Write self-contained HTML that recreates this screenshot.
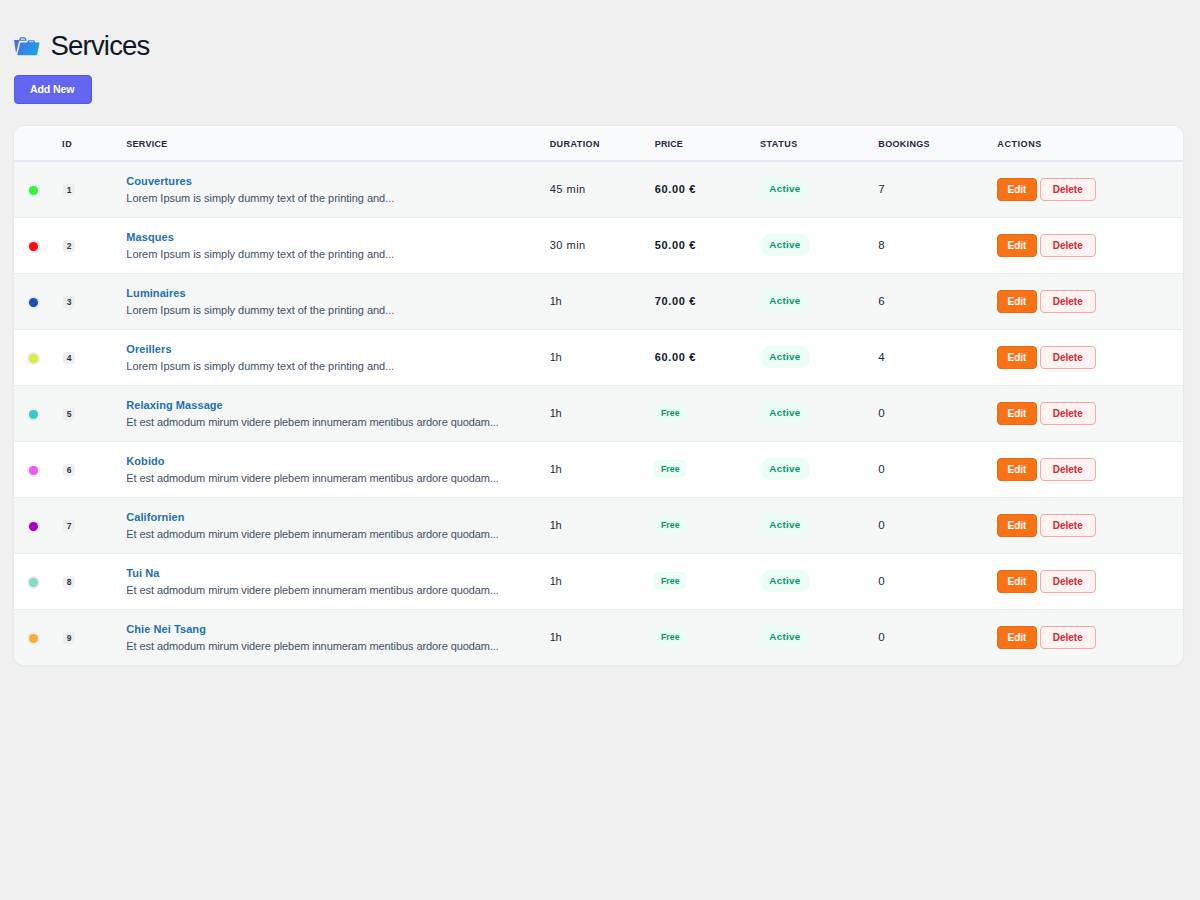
<!DOCTYPE html>
<html lang="en">
<head>
<meta charset="utf-8">
<title>Services</title>
<style>
*{box-sizing:border-box}
html,body{margin:0;padding:0}
body{width:1200px;height:900px;background:#f0f0f1;font-family:"Liberation Sans",sans-serif;color:#1e293b;position:relative;overflow:hidden}
.topband{position:absolute;left:0;top:15px;width:1200px;height:1px;background:#f2f2f2}
h1{position:absolute;left:50.5px;top:28px;margin:0;height:36px;line-height:36px;font-weight:400;font-size:27.5px;color:#0f172a;letter-spacing:-0.8px;white-space:nowrap}
.ico{position:absolute;left:14px;top:37px;width:26px;height:19px;display:block}
.add{position:absolute;left:13.7px;top:75px;width:78.5px;height:29px;letter-spacing:-.12px;padding:0 1.5px 1.6px 0;background:#6366f1;border:1px solid #5457e0;border-radius:4px;color:#fff;font-weight:700;font-size:10.6px;display:flex;align-items:center;justify-content:center}
.card{position:absolute;left:14px;top:126px;width:1169px;height:539px;background:#fff;border-radius:10px;overflow:hidden;box-shadow:0 0 0 1px #e6e9f0,0 1px 3px rgba(15,23,42,.06)}
.head{height:36px;background:#f8fafc;border-bottom:2px solid #e2e8f0;position:relative}
.head span{position:absolute;top:13px;font-size:9px;font-weight:700;letter-spacing:.4px;color:#1e293b;text-transform:uppercase;line-height:11px}
.row{height:56px;position:relative;border-bottom:1px solid #e8ebf0;background:#fff}
.row.alt{background:#f6f7f7}
.row:last-child{border-bottom:0}
.row>*{position:absolute}
.dot{left:15.1px;top:23.9px;width:8.8px;height:8.8px;border-radius:50%;box-shadow:0 0 0 1.9px #e9ebf1}
.id{left:49px;top:22px;width:12px;height:12px;background:#efefef;border-radius:3px;font-size:8.5px;font-weight:700;color:#27344a;text-align:center;line-height:12px}
.name{left:112.3px;top:12px;font-size:11px;font-weight:700;color:#2271b1;line-height:15px;white-space:nowrap;letter-spacing:.07px}
.desc{left:112.3px;top:29px;font-size:11px;color:#434f63;line-height:14px;white-space:nowrap;letter-spacing:-.03px}
.dur{left:535.7px;top:19.5px;font-size:11px;letter-spacing:-.4px;color:#1e293b;line-height:15px;white-space:nowrap}
.dur.w{letter-spacing:.5px}
.desc.e{letter-spacing:-.085px}
.price{left:640.7px;top:19.5px;font-size:11px;font-weight:700;color:#0f172a;line-height:15px;letter-spacing:.65px;white-space:nowrap}
.free{left:640.3px;top:18.3px;height:17.7px;width:32px;text-align:center;border-radius:5px;background:#ecfdf5;color:#059669;font-size:8.7px;font-weight:700;line-height:18.4px;letter-spacing:.05px}
.status{left:745.8px;top:15.6px;width:50.2px;height:22.8px;letter-spacing:.3px;border-radius:11.5px;background:#ecfdf5;color:#059669;font-size:9.8px;font-weight:700;line-height:22.8px;text-align:center}
.book{left:864.3px;top:19.5px;font-size:11.5px;color:#1e293b;line-height:15px}
.edit{left:983px;top:16px;width:40px;height:23px;border-radius:4px;background:#f97316;border:1px solid #ea6a0c;color:#fff;font-size:10px;font-weight:700;line-height:21px;text-align:center}
.del{left:1026px;top:16px;width:55.5px;height:23px;border-radius:4px;background:#fef2f2;border:1px solid #fca5a5;color:#d62a2a;font-size:10px;font-weight:700;line-height:21px;text-align:center}
</style>
</head>
<body>
<div class="topband"></div>
<svg class="ico" viewBox="0 0 26 19"><defs><linearGradient id="g" gradientUnits="userSpaceOnUse" x1="0" y1="2" x2="26" y2="18"><stop offset="0" stop-color="#5262f2"/><stop offset="1" stop-color="#14acdc"/></linearGradient></defs><path fill="url(#g)" d="M0 3.1 L5 3.1 L6 0.9 Q6.3 0.3 7 0.3 L10.6 0.3 Q11.3 0.3 11.6 0.9 L12.7 3.3 L12.7 3.8 L5.6 3.8 L5.2 3.6 L2.3 15.6 L1.9 15.6 Z M6.7 2.85 L11 2.85 L10.5 1.6 L7.2 1.6 Z" fill-rule="evenodd"/><path fill="url(#g)" d="M7 5.4 L13.1 5.4 L14.1 3.6 Q14.3 3.2 14.8 3.2 L19.9 3.2 Q20.4 3.2 20.5 3.6 L21.1 5.4 L25 5.4 Q25.7 5.4 25.5 6.1 L23.1 17.7 Q23 18.3 22.4 18.3 L3.9 18.3 Q3.1 18.3 3.3 17.6 L6.3 6 Q6.5 5.4 7 5.4 Z"/><path d="M15 5.2 L15.5 4.1 L19.5 4.1 L19.8 5.2 Z" fill="#a9cdf3"/></svg>
<h1>Services</h1>
<div class="add">Add New</div>
<div class="card">
<div class="head"><span style="left:48px;letter-spacing:0.7px">ID</span><span style="left:112.3px;letter-spacing:0.27px">Service</span><span style="left:535.7px;letter-spacing:0.43px">Duration</span><span style="left:640.8px;letter-spacing:0.13px">Price</span><span style="left:746px;letter-spacing:0.52px">Status</span><span style="left:864.3px;letter-spacing:0.33px">Bookings</span><span style="left:983.3px;letter-spacing:0.58px">Actions</span></div>
<div class="row alt"><i class="dot" style="background:#36f536"></i><span class="id">1</span><span class="name">Couvertures</span><span class="desc">Lorem Ipsum is simply dummy text of the printing and...</span><span class="dur w">45 min</span><span class="price">60.00 €</span><span class="status">Active</span><span class="book">7</span><span class="edit">Edit</span><span class="del">Delete</span></div>
<div class="row"><i class="dot" style="background:#fb0a12"></i><span class="id">2</span><span class="name">Masques</span><span class="desc">Lorem Ipsum is simply dummy text of the printing and...</span><span class="dur w">30 min</span><span class="price">50.00 €</span><span class="status">Active</span><span class="book">8</span><span class="edit">Edit</span><span class="del">Delete</span></div>
<div class="row alt"><i class="dot" style="background:#1a4fb8"></i><span class="id">3</span><span class="name">Luminaires</span><span class="desc">Lorem Ipsum is simply dummy text of the printing and...</span><span class="dur">1h</span><span class="price">70.00 €</span><span class="status">Active</span><span class="book">6</span><span class="edit">Edit</span><span class="del">Delete</span></div>
<div class="row"><i class="dot" style="background:#d4f03c"></i><span class="id">4</span><span class="name">Oreillers</span><span class="desc">Lorem Ipsum is simply dummy text of the printing and...</span><span class="dur">1h</span><span class="price">60.00 €</span><span class="status">Active</span><span class="book">4</span><span class="edit">Edit</span><span class="del">Delete</span></div>
<div class="row alt"><i class="dot" style="background:#3cc8c8"></i><span class="id">5</span><span class="name">Relaxing Massage</span><span class="desc e">Et est admodum mirum videre plebem innumeram mentibus ardore quodam...</span><span class="dur">1h</span><span class="free">Free</span><span class="status">Active</span><span class="book">0</span><span class="edit">Edit</span><span class="del">Delete</span></div>
<div class="row"><i class="dot" style="background:#ee5af5"></i><span class="id">6</span><span class="name">Kobido</span><span class="desc e">Et est admodum mirum videre plebem innumeram mentibus ardore quodam...</span><span class="dur">1h</span><span class="free">Free</span><span class="status">Active</span><span class="book">0</span><span class="edit">Edit</span><span class="del">Delete</span></div>
<div class="row alt"><i class="dot" style="background:#a800c0"></i><span class="id">7</span><span class="name">Californien</span><span class="desc e">Et est admodum mirum videre plebem innumeram mentibus ardore quodam...</span><span class="dur">1h</span><span class="free">Free</span><span class="status">Active</span><span class="book">0</span><span class="edit">Edit</span><span class="del">Delete</span></div>
<div class="row"><i class="dot" style="background:#86dcc0"></i><span class="id">8</span><span class="name">Tui Na</span><span class="desc e">Et est admodum mirum videre plebem innumeram mentibus ardore quodam...</span><span class="dur">1h</span><span class="free">Free</span><span class="status">Active</span><span class="book">0</span><span class="edit">Edit</span><span class="del">Delete</span></div>
<div class="row alt"><i class="dot" style="background:#f8ac3a"></i><span class="id">9</span><span class="name">Chie Nei Tsang</span><span class="desc e">Et est admodum mirum videre plebem innumeram mentibus ardore quodam...</span><span class="dur">1h</span><span class="free">Free</span><span class="status">Active</span><span class="book">0</span><span class="edit">Edit</span><span class="del">Delete</span></div>
</div>
</body>
</html>
